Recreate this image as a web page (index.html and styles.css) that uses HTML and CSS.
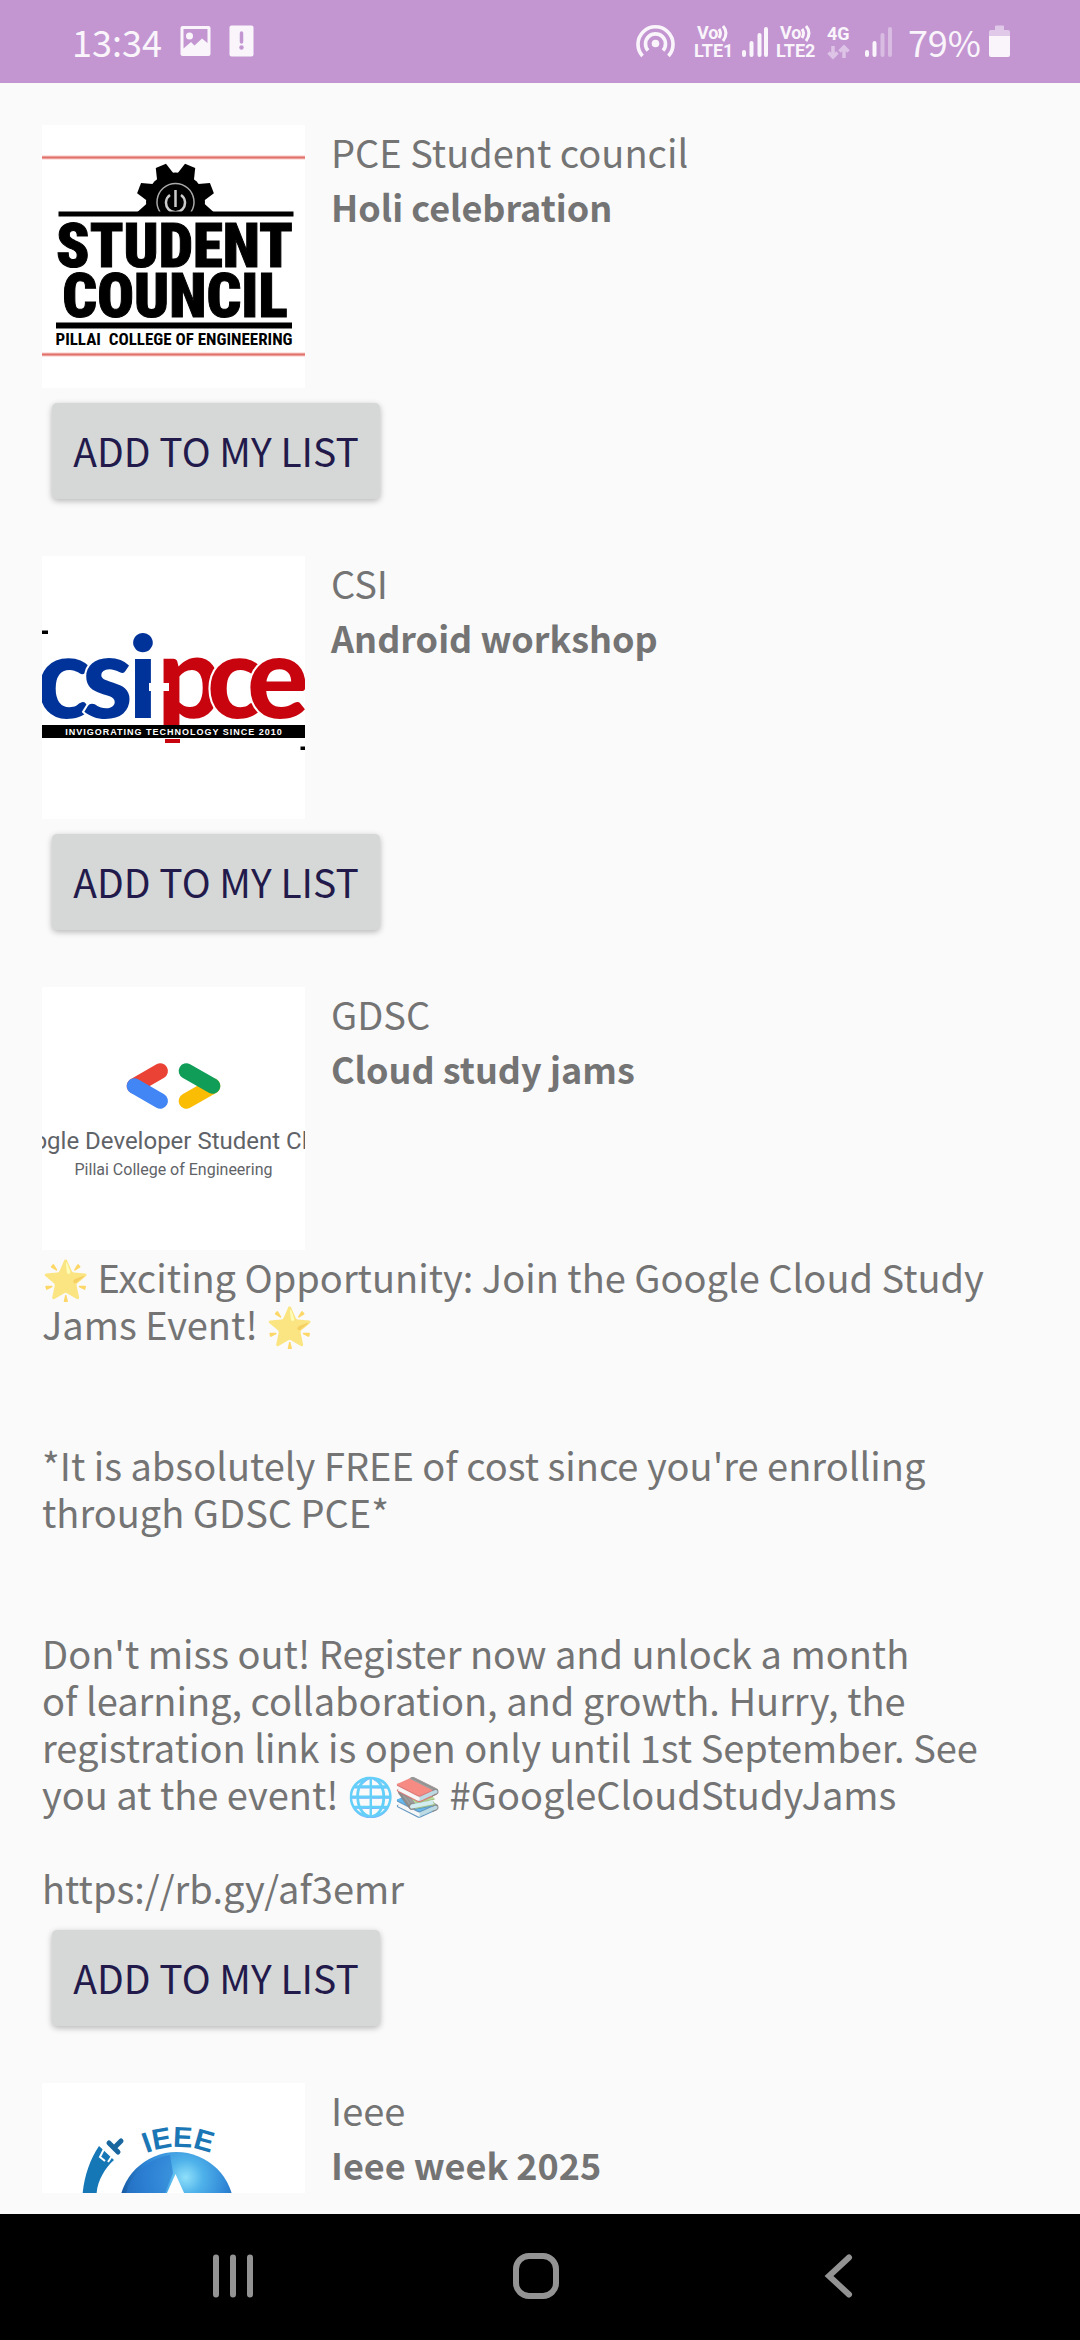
FILE: index.html
```html
<!DOCTYPE html>
<html lang="en">
<head>
<meta charset="utf-8">
<meta name="viewport" content="width=device-width, initial-scale=1">
<title>Events</title>
<link rel="stylesheet" href="styles.css">
</head>
<body>
<header class="status">
  <div class="status-left">
    <span class="clock">13:34</span>
    <svg width="31" height="36" viewBox="0 0 30 36" fill="#f9f5fb" aria-hidden="true"><path fill-rule="evenodd" d="M2 3h26a2 2 0 0 1 2 2v26a2 2 0 0 1-2 2H2a2 2 0 0 1-2-2V5a2 2 0 0 1 2-2zM3 6v19.500l7.500-6.500 3.500 3.500 7.500-7 5.500 4.500V6z"/><circle cx="9" cy="13" r="3.500"/></svg>
    <svg width="25" height="36" viewBox="0 0 24 36" aria-hidden="true"><rect y="2.500" width="24" height="31" rx="2" fill="#f9f5fb"/><path d="M12 10v9" stroke="#c396d2" stroke-width="3.500" stroke-linecap="round"/><circle cx="12" cy="24.500" r="2.200" fill="#c396d2"/></svg>
  </div>
  <div class="status-right">
    <svg width="50" height="36" viewBox="0 0 50 36" fill="none" stroke="#f9f5fb" stroke-width="3.600" aria-hidden="true"><path d="M6.500 33a17.500 17.500 0 1 1 26 0"/><path d="M12 27.500a10 10 0 1 1 15 0"/><circle cx="19.500" cy="20.500" r="3.800" fill="#f9f5fb" stroke="none"/></svg>
    <svg width="40" height="36" viewBox="0 0 40 36" class="net" aria-label="VoLTE 1"><text x="3" y="16">Vo</text><text x="0" y="34">LTE1</text><path d="M25 6q3 4 0 9M29 3q6 7 0 15" class="wave"/></svg>
    <svg width="26" height="36" viewBox="0 0 26 36" class="bars" aria-label="Signal, SIM 1"><path d="M2 32v-3M9.500 32v-12M17.500 32v-20M24 32V6"/></svg>
    <svg width="40" height="36" viewBox="0 0 40 36" class="net" aria-label="VoLTE 2"><text x="4" y="16">Vo</text><text x="0" y="34">LTE2</text><path d="M26 6q3 4 0 9M30 3q6 7 0 15" class="wave"/></svg>
    <svg width="31" height="36" viewBox="0 0 31 36" class="net" aria-label="4G"><text x="3" y="17">4G</text><path d="M9 23v11M4.500 29.500L9 34l4.500-4.500M20 35V24M15.500 28.500L20 24l4.500 4.500" fill="none" stroke="#ddc3e6" stroke-width="3.500"/></svg>
    <svg width="37" height="36" viewBox="0 0 37 36" class="bars" aria-label="Signal, SIM 2"><path d="M4 32v-3M11.500 32v-12"/><path d="M19.500 32v-20M27 32V6" opacity=".4"/></svg>
    <span class="clock">79%</span>
    <svg width="21" height="36" viewBox="0 0 21 36" aria-label="Battery"><path d="M6 7V3.500a1 1 0 0 1 1-1h7a1 1 0 0 1 1 1V7h4a2 2 0 0 1 2 2v5H0V9a2 2 0 0 1 2-2z" fill="#e0c9e8"/><path d="M0 13h21v19a2 2 0 0 1-2 2H2a2 2 0 0 1-2-2z" fill="#f9f5fb"/></svg>
  </div>
</header>

<main class="list">
  <article class="event">
    <div class="head">
      <svg class="logo" viewBox="0 0 263 263" aria-label="Student Council, Pillai College of Engineering">
        <path d="M0 32.500h263M0 229.500h263" stroke="#f9c9c6" stroke-width="4"/>
        <path d="M0 32.500h263M0 229.500h263" stroke="#e0706c" stroke-width="2"/>
        <clipPath id="gear"><path d="M80 30h110v58H80z"/></clipPath>
        <g clip-path="url(#gear)">
          <circle cx="133.500" cy="77" r="29.500"/>
          <path d="M124 52l4-14h11l4 14z" transform="rotate(-22 133.500 77)"/>
          <path d="M124 52l4-14h11l4 14z" transform="rotate(22 133.500 77)"/>
          <path d="M124 52l4-14h11l4 14z" transform="rotate(-69 133.500 77)"/>
          <path d="M124 52l4-14h11l4 14z" transform="rotate(69 133.500 77)"/>
          <path d="M122 52l4-14h15l4 14z" transform="rotate(-116 133.500 77)"/>
          <path d="M122 52l4-14h15l4 14z" transform="rotate(116 133.500 77)"/>
          <path d="M118 87a18.500 18.500 0 1 1 31 0" fill="none" stroke="#aaa" stroke-width="1.500"/>
          <path d="M128 70a9.500 9.500 0 1 0 11 0M133.500 65v17" fill="none" stroke="#ccc" stroke-width="2.500"/>
        </g>
        <path d="M16.500 86.500h235v5h-235zM14 197.500h236v6H14z"/>
        <text class="block" x="132.500" y="142">STUDENT</text>
        <text class="block" x="133" y="192">COUNCIL</text>
        <text class="college" x="132" y="220">PILLAI&#160; COLLEGE OF ENGINEERING</text>
      </svg>
      <div class="titles"><p class="club">PCE Student council</p><h2 class="name">Holi celebration</h2></div>
    </div>
    <button class="add" type="button">ADD TO MY LIST</button>
  </article>

  <article class="event">
    <div class="head">
      <svg class="logo" viewBox="0 0 263 263" aria-label="CSI PCE">
        <path d="M0 74.500h6v3.500H0zM258.500 190.500h5v3.500h-5z"/>
        <path d="M123 160h15v27h-15z" fill="#c8040e"/>
        <g class="csi" fill="#003399"><text x="-6" y="162">c</text><text x="40" y="162">s</text><text x="86" y="162">i</text></g>
        <g class="csi" fill="#c8040e"><text x="115" y="162">p</text><text x="165" y="162">c</text><text x="205" y="162">e</text></g>
        <path d="M107 127h20v8h-20z" fill="#fff"/>
        <path d="M0 169h263v13H0z"/>
        <text class="since" x="132" y="179">INVIGORATING TECHNOLOGY SINCE 2010</text>
      </svg>
      <div class="titles"><p class="club">CSI</p><h2 class="name">Android workshop</h2></div>
    </div>
    <button class="add" type="button">ADD TO MY LIST</button>
  </article>

  <article class="event">
    <div class="head">
      <svg class="logo" viewBox="0 0 263 263" aria-label="Google Developer Student Clubs">
        <g fill="none" stroke-width="15.300" stroke-linecap="round">
          <path d="M118.300 84l-26 15" stroke="#ea4335"/><path d="M92.300 99l26 15" stroke="#4285f4"/>
          <path d="M144.300 114l26.400-15" stroke="#fbbc04"/><path d="M170.700 99l-26.400-15" stroke="#0f9d58"/>
        </g>
        <text class="gdsc" x="133" y="162" font-size="24">Google Developer Student Clubs</text>
        <text class="gdsc" x="131.500" y="188" font-size="16">Pillai College of Engineering</text>
      </svg>
      <div class="titles"><p class="club">GDSC</p><h2 class="name">Cloud study jams</h2></div>
    </div>
    <div class="desc">
      <p><span class="emoji">🌟</span> Exciting Opportunity: Join the Google Cloud Study<br>Jams Event! <span class="emoji">🌟</span></p>
      <p>*It is absolutely FREE of cost since you're enrolling<br>through GDSC PCE*</p>
      <p>Don't miss out! Register now and unlock a month<br>of learning, collaboration, and growth. Hurry, the<br>registration link is open only until 1st September. See<br>you at the event! <span class="emoji">🌐📚</span> #GoogleCloudStudyJams<br><br><a href="https://rb.gy/af3emr">https://rb.gy/af3emr</a></p>
    </div>
    <button class="add" type="button">ADD TO MY LIST</button>
  </article>

  <article class="event">
    <div class="head">
      <svg class="logo" viewBox="0 0 263 263" aria-label="IEEE">
        <defs>
          <radialGradient id="globe" cx=".58" cy=".22" r=".6"><stop offset="0" stop-color="#8fe0fa"/><stop offset=".25" stop-color="#4fb2ea"/><stop offset=".6" stop-color="#2f86d6"/><stop offset="1" stop-color="#14549c"/></radialGradient>
          <path id="arc" d="M51.500 149a85 85 0 0 1 170 0"/>
        </defs>
        <circle cx="134.500" cy="126.500" r="57.500" fill="url(#globe)"/>
        <path d="M86 103q14-26 42-31l3 18-12 30H82z" fill="#2a79d0" opacity=".6"/>
        <path d="M133.500 91l9 20 20 60h-58l20-60z" fill="#fff"/>
        <text class="ieee"><textPath href="#arc" startOffset="50%">IEEE</textPath></text>
        <path d="M40.500 112C42 94 48 76 57 63l15 14c-9 8-17 21-17.500 35L52 150H41z" fill="#1577b5"/>
        <path d="M67 60l9 9M73 64l6-6" stroke="#1a669f" stroke-width="5" fill="none" stroke-linecap="round"/>
        <path d="M62 66l-4 8 5 4M63 65l6 6M66 79l4-6" stroke="#fff" stroke-width="2" fill="none"/>
      </svg>
      <div class="titles"><p class="club">Ieee</p><h2 class="name">Ieee week 2025</h2></div>
    </div>
  </article>
</main>

<nav class="nav">
  <button type="button" aria-label="Recent apps"><svg width="46" height="46" viewBox="0 0 46 46"><path d="M6 4.500v37M23 4.500v37M40 4.500v37"/></svg></button>
  <button type="button" aria-label="Home"><svg width="46" height="46" viewBox="0 0 46 46"><rect x="3" y="3" width="40" height="40" rx="13"/></svg></button>
  <button type="button" aria-label="Back"><svg width="46" height="46" viewBox="0 0 46 46"><path d="M33 4.500L13 23l20 18.500"/></svg></button>
</nav>
</body>
</html>
```

FILE: styles.css
```css
* {
  box-sizing: border-box;
}

body {
  margin: 0;
  height: 100vh;
  display: flex;
  flex-direction: column;
  overflow: hidden;
  background: #fafafa;
  color: #747474;
  font-family: "Noto Sans CJK SC", "Noto Sans", sans-serif;
  font-size: 38px;
  line-height: 47px;
}

p,
h2 {
  margin: 0;
}

/* Status bar */
.status {
  flex: none;
  height: 83px;
  padding: 0 70px 2px 72px;
  display: flex;
  justify-content: space-between;
  align-items: center;
  background: #c396d2;
}

.status-left,
.status-right {
  display: flex;
  align-items: center;
}

.status-left {
  gap: 18px;
}

.status-right {
  gap: 8px;
}

.clock {
  color: #f9f5fb;
  font-size: 36px;
  line-height: 48px;
}

.net {
  overflow: visible;
}

.net text {
  font: 700 18px Roboto, sans-serif;
  fill: #f9f5fb;
}

.wave {
  fill: none;
  stroke: #f9f5fb;
  stroke-width: 3;
}

.bars {
  stroke: #f9f5fb;
  stroke-width: 4;
  stroke-linecap: round;
}

/* Event list */
.list {
  flex: 1;
  min-height: 0;
  overflow: hidden;
  margin-bottom: 21px;
  padding: 42px 42px 0;
}

.event {
  margin-bottom: 57px;
}

.head {
  display: flex;
  gap: 26px;
}

.logo {
  flex: none;
  width: 263px;
  height: 263px;
  background: #fff;
  overflow: hidden;
}

.titles {
  line-height: 54px;
}

.name {
  font-size: 36px;
  font-weight: 700;
}

.desc {
  display: grid;
  gap: 94px;
  padding: 3px 0 4px;
}

.desc a {
  color: inherit;
  text-decoration: none;
}

.emoji {
  opacity: .6;
}

.add {
  display: block;
  min-width: 328px;
  height: 96px;
  margin: 15px 0 0 10px;
  padding: 0 20px 2px;
  border: 0;
  border-radius: 5px;
  background: #d6d8d7;
  box-shadow: 0 2px 6px rgba(0, 0, 0, .28);
  color: #231a4c;
  font: inherit;
  font-size: 39px;
}

/* Logo lettering */
.block,
.college,
.since,
.gdsc,
.ieee {
  text-anchor: middle;
}

.block {
  font: 900 61px "Roboto Condensed", Roboto, sans-serif;
  stroke: #000;
  stroke-width: 1px;
}

.college {
  font: 700 17px "Roboto Condensed", Roboto, sans-serif;
}

.csi {
  font: 900 115px Lato, sans-serif;
  stroke: #fff;
  stroke-width: 4px;
  paint-order: stroke;
}

.since {
  font: 700 9px "Liberation Sans", sans-serif;
  letter-spacing: 1px;
  fill: #fff;
}

.gdsc {
  font-family: Roboto, sans-serif;
  fill: #5f6368;
}

.ieee {
  font: 700 29px "Liberation Sans", sans-serif;
  fill: #1a76b4;
}

/* System navigation */
.nav {
  flex: none;
  height: 126px;
  padding: 0 90px 3px 82px;
  display: flex;
  align-items: center;
  background: #000;
}

.nav button {
  flex: 1;
  padding: 0;
  border: 0;
  background: none;
  line-height: 0;
}

.nav svg {
  fill: none;
  stroke: #939393;
  stroke-width: 6;
  stroke-linecap: round;
}
```
